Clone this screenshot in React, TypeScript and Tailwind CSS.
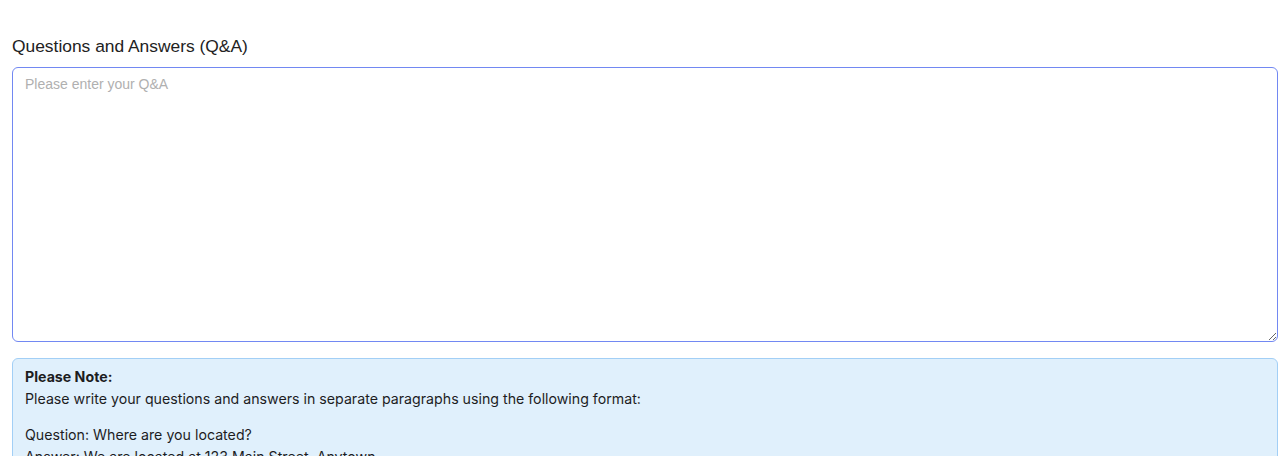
import React from 'react';

export default function App() {
  return (
    <div className="min-h-screen bg-white pl-3 pt-[35px]">
      <label
        htmlFor="qa"
        className="block mb-[10px] text-[17.4px] leading-[22px] text-[#222222] font-['Liberation_Sans',Arial,sans-serif]"
      >
        Questions and Answers (Q&amp;A)
      </label>
      <textarea
        id="qa"
        placeholder="Please enter your Q&A"
        className="block w-full h-[275px] rounded-[6px] border border-[#7288f2] bg-white px-3 py-[6px] text-[14px] leading-5 text-[#212529] placeholder:text-[#b0b0b0] outline-none font-['Liberation_Sans',Arial,sans-serif]"
      />

      {/* Format hint */}
      <div className="mt-4 rounded-[6px] border border-[#a2cff6] bg-[#e0f0fc] px-3 pt-[7px] pb-3 text-[14.2px] leading-[22px] text-[#1d1d1f] font-['Inter',sans-serif]">
        <div className="font-bold">Please Note:</div>
        <p className="mb-[14px]">Please write your questions and answers in separate paragraphs using the following format:</p>
        <p>Question: Where are you located?</p>
        <p className="mb-[14px]">Answer: We are located at 123 Main Street, Anytown.</p>
        <p>Question: What are your opening hours?</p>
        <p>Answer: We are open Monday to Friday, 9am to 5pm.</p>
      </div>
    </div>
  );
}
